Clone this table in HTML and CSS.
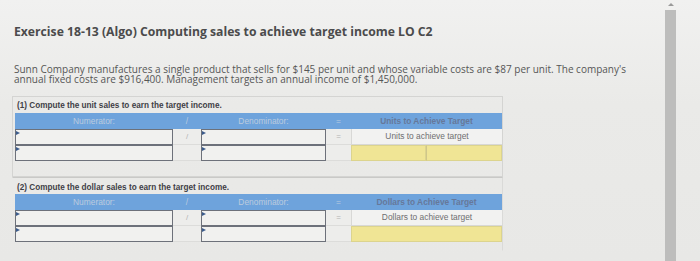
FILE: index.html
```html
<!DOCTYPE html>
<html>
<head>
<meta charset="utf-8">
<link rel="stylesheet" href="styles.css">
</head>
<body>
<div class="page">
  <main class="content">
    <h1 class="title">Exercise 18-13 (Algo) Computing sales to achieve target income LO C2</h1>
    <p class="desc">Sunn Company manufactures a single product that sells for $145 per unit and whose variable costs are $87 per unit. The company's annual fixed costs are $916,400. Management targets an annual income of $1,450,000.</p>

    <section class="part part1">
      <div class="part-label">(1) Compute the unit sales to earn the target income.</div>
      <div class="grid">
        <div class="hd">Numerator:</div>
        <div class="hd">/</div>
        <div class="hd">Denominator:</div>
        <div class="hd">=</div>
        <div class="hd hd-res">Units to Achieve Target</div>

        <div class="inp"></div>
        <div class="op">/</div>
        <div class="inp"></div>
        <div class="op">=</div>
        <div class="res">Units to achieve target</div>

        <div class="inp"></div>
        <div class="op"></div>
        <div class="inp"></div>
        <div class="op"></div>
        <div class="res-split"><div class="yel"></div><div class="yel"></div></div>
      </div>
    </section>

    <section class="part part2">
      <div class="part-label">(2) Compute the dollar sales to earn the target income.</div>
      <div class="grid">
        <div class="hd">Numerator:</div>
        <div class="hd">/</div>
        <div class="hd">Denominator:</div>
        <div class="hd">=</div>
        <div class="hd hd-res">Dollars to Achieve Target</div>

        <div class="inp"></div>
        <div class="op">/</div>
        <div class="inp"></div>
        <div class="op">=</div>
        <div class="res">Dollars to achieve target</div>

        <div class="inp"></div>
        <div class="op"></div>
        <div class="inp"></div>
        <div class="op"></div>
        <div class="yel yel-full"></div>
      </div>
    </section>
  </main>
  <div class="scrollbar"><div class="arrow"></div><div class="thumb"></div></div>
</div>
</body>
</html>
```

FILE: styles.css
```css
html, body {
  margin: 0;
  padding: 0;
}
body {
  width: 700px;
  height: 261px;
  overflow: hidden;
  background: linear-gradient(180deg, #f1f1f0 0%, #eaeae8 40%, #e8e8e6 100%);
  font-family: "Liberation Sans", Arial, sans-serif;
}
.page {
  display: flex;
  height: 261px;
}
.content {
  width: 640px;
  padding-left: 12px;
  flex: none;
}
.title {
  margin: 25px 0 0 2px;
  font-family: "Open Sans", Lato, sans-serif;
  font-weight: 700;
  font-size: 12.2px;
  line-height: 14px;
  color: #4b4b4c;
}
.desc {
  margin: 25px 0 0 2px;
  font-family: "Open Sans", Lato, sans-serif;
  font-size: 10px;
  line-height: 10px;
  color: #565656;
  width: 626px;
}
.part {
  width: 487px;
  padding: 0 0 0 2px;
  border: 1px solid #d4d4d2;
  box-sizing: content-box;
}
.part1 {
  margin-top: 12px;
  height: 79px;
}
.part2 {
  border-top: 1px solid #c9c9c7;
  border-left-color: transparent;
  border-right-color: #dadad8;
  border-bottom-color: transparent;
  height: 72px;
}
.part-label {
  font-weight: 700;
  font-size: 8.2px;
  line-height: 10px;
  padding: 4px 0 2px 2px;
  color: #3f4046;
}
.part2 .part-label {
  padding-top: 5px;
  padding-bottom: 1px;
}
.grid {
  display: grid;
  grid-template-columns: 158px 28px 125px 25px 151px;
  grid-template-rows: 16px 16px 16px;
}
.hd {
  background: #6ea3dc;
  color: #bccbde;
  font-size: 8.4px;
  line-height: 16px;
  text-align: center;
}
.hd-res {
  color: #66789a;
  font-weight: 700;
}
.inp {
  position: relative;
  border: 1px solid #6d717a;
  background: #f1f1ef;
}
.inp::before {
  content: "";
  position: absolute;
  left: 0;
  top: 1px;
  border-left: 4px solid #3c5c8c;
  border-top: 2px solid transparent;
  border-bottom: 2px solid transparent;
}
.op {
  border-bottom: 1px solid #dcdcda;
  color: #b3b3b3;
  font-size: 8px;
  line-height: 15px;
  text-align: center;
  background: #ededeb;
}
.res {
  border-bottom: 1px solid #d8d8d6;
  border-left: 1px solid #d8d8d6;
  background: #f2f2f1;
  color: #6e6e70;
  font-size: 8.4px;
  line-height: 15px;
  text-align: center;
}
.res-split {
  display: grid;
  grid-template-columns: 75px 76px;
}
.yel {
  background: #f0e595;
  border: 1px solid #dcd48e;
}
.res-split .yel + .yel {
  border-left: 1px solid #cfc68a;
}
.yel-full {
  border: 1px solid #dcd48e;
}
.scrollbar {
  margin-left: 13px;
  width: 12px;
  position: relative;
  flex: none;
}
.arrow {
  position: absolute;
  left: 3px;
  top: 3px;
  border-bottom: 3px solid #9a9a9a;
  border-left: 3px solid transparent;
  border-right: 3px solid transparent;
}
.thumb {
  position: absolute;
  left: 0;
  top: 10px;
  bottom: 0;
  width: 11px;
  background: #bdbdbc;
}
```
